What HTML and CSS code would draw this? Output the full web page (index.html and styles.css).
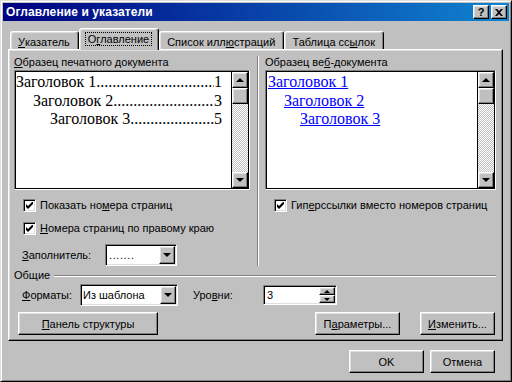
FILE: index.html
```html
<!DOCTYPE html>
<html lang="ru">
<head>
    <meta charset="UTF-8">
    <title>Оглавление и указатели</title>
    <link rel="stylesheet" href="styles.css">
</head>
<body>
<div class="window">
    <div class="titlebar">
        <span class="title">Оглавление и указатели</span>
        <div class="caption-buttons">
            <button class="caption-btn">?</button>
            <button class="caption-btn">
                <svg width="8" height="7" viewBox="0 0 8 7"><path d="M0 0H2L4 2L6 0H8L5 3.5L8 7H6L4 5L2 7H0L3 3.5Z" fill="#000"/></svg>
            </button>
        </div>
    </div>

    <div class="dialog">
        <div class="tabs">
            <div class="tab"><u>У</u>казатель</div>
            <div class="tab active"><span class="focus">О<u>г</u>лавление</span></div>
            <div class="tab">Список илл<u>ю</u>страций</div>
            <div class="tab">Таблица сс<u>ы</u>лок</div>
        </div>

        <div class="panel">
            <div class="samples">
                <div class="sample print">
                    <div class="sample-label"><u>О</u>бразец печатного документа</div>
                    <div class="preview">
                        <div class="preview-page">
                            <div class="toc-line"><span>Заголовок 1</span><span class="leader"></span><span>1</span></div>
                            <div class="toc-line lvl2"><span>Заголовок 2</span><span class="leader"></span><span>3</span></div>
                            <div class="toc-line lvl3"><span>Заголовок 3</span><span class="leader"></span><span>5</span></div>
                        </div>
                        <div class="scrollbar">
                            <div class="sb-btn"><i class="arrow-up"></i></div>
                            <div class="sb-thumb"></div>
                            <div class="sb-track"></div>
                            <div class="sb-btn"><i class="arrow-down"></i></div>
                        </div>
                    </div>

                    <label class="check">
                        <span class="checkbox"><svg width="7" height="7" viewBox="0 0 7 7"><path d="M0 2L2 4L7 -1V2L2 7L0 5Z" fill="#000"/></svg></span>
                        <span>Показать но<u>м</u>ера страниц</span>
                    </label>
                    <label class="check">
                        <span class="checkbox"><svg width="7" height="7" viewBox="0 0 7 7"><path d="M0 2L2 4L7 -1V2L2 7L0 5Z" fill="#000"/></svg></span>
                        <span><u>Н</u>омера страниц по правому краю</span>
                    </label>

                    <div class="field-row">
                        <span class="field-label filler-label"><u>З</u>аполнитель:</span>
                        <div class="combo filler">
                            <span class="combo-value dots">.......</span>
                            <span class="combo-btn"><i class="arrow-down"></i></span>
                        </div>
                    </div>
                </div>

                <div class="divider"></div>

                <div class="sample web">
                    <div class="sample-label">Образец ве<u>б</u>-документа</div>
                    <div class="preview">
                        <div class="preview-page web-page">
                            <a href="#">Заголовок 1</a>
                            <a href="#" class="lvl2">Заголовок 2</a>
                            <a href="#" class="lvl3">Заголовок 3</a>
                        </div>
                        <div class="scrollbar">
                            <div class="sb-btn"><i class="arrow-up"></i></div>
                            <div class="sb-thumb"></div>
                            <div class="sb-track"></div>
                            <div class="sb-btn"><i class="arrow-down"></i></div>
                        </div>
                    </div>

                    <label class="check">
                        <span class="checkbox"><svg width="7" height="7" viewBox="0 0 7 7"><path d="M0 2L2 4L7 -1V2L2 7L0 5Z" fill="#000"/></svg></span>
                        <span>Гип<u>е</u>рссылки вместо номеров страниц</span>
                    </label>
                </div>
            </div>

            <div class="group-title">Общие</div>

            <div class="formats-row">
                <span class="field-label formats-label"><u>Ф</u>орматы:</span>
                <div class="combo formats">
                    <span class="combo-value">Из шаблона</span>
                    <span class="combo-btn"><i class="arrow-down"></i></span>
                </div>
                <span class="field-label levels-label">Уро<u>в</u>ни:</span>
                <div class="spin">
                    <span class="spin-value">3</span>
                    <span class="spin-btns">
                        <span class="spin-btn"><i class="arrow-up small"></i></span>
                        <span class="spin-btn"><i class="arrow-down small"></i></span>
                    </span>
                </div>
            </div>

            <div class="actions-row">
                <button class="btn outline-btn"><u>П</u>анель структуры</button>
                <div class="actions-right">
                    <button class="btn params-btn">П<u>а</u>раметры...</button>
                    <button class="btn edit-btn"><u>И</u>зменить...</button>
                </div>
            </div>
        </div>

        <div class="dialog-buttons">
            <button class="btn ok-btn">OK</button>
            <button class="btn cancel-btn">Отмена</button>
        </div>
    </div>
</div>
</body>
</html>
```

FILE: styles.css
```css
* {
    margin: 0;
    padding: 0;
    box-sizing: border-box;
}

body {
    font-family: "Liberation Sans", Arial, sans-serif;
    font-size: 11px;
    color: #000;
    background: #c0c0c0;
}

button {
    font: inherit;
    color: inherit;
}

.window {
    width: 512px;
    height: 382px;
    padding: 2px;
    background: #c0c0c0;
    border: 1px solid;
    border-color: #dfdfdf #000 #000 #dfdfdf;
    box-shadow: inset 1px 1px #fff, inset -1px -1px #808080;
}

/* title bar */
.titlebar {
    height: 18px;
    display: flex;
    align-items: center;
    justify-content: space-between;
    padding: 0 2px 0 3px;
    background: linear-gradient(to right, #000080, #1084d0);
}

.title {
    color: #fff;
    font-size: 12px;
    font-weight: bold;
    letter-spacing: 0.1px;
}

.caption-buttons {
    display: flex;
    gap: 2px;
}

.caption-btn {
    width: 16px;
    height: 14px;
    display: flex;
    align-items: center;
    justify-content: center;
    font-weight: bold;
    line-height: 1;
    background: #c0c0c0;
    border: 1px solid;
    border-color: #fff #000 #000 #fff;
    box-shadow: inset -1px -1px #808080, inset 1px 1px #dfdfdf;
}

/* raised / sunken bits */
.btn,
.sb-btn,
.sb-thumb,
.combo-btn,
.spin-btn {
    background: #c0c0c0;
    border: 1px solid;
    border-color: #fff #000 #000 #fff;
    box-shadow: inset -1px -1px #808080, inset 1px 1px #dfdfdf;
    display: flex;
    align-items: center;
    justify-content: center;
}

.btn {
    height: 23px;
}

.combo,
.spin,
.checkbox {
    background: #fff;
    border: 1px solid;
    border-color: #808080 #fff #fff #808080;
    box-shadow: inset 1px 1px #000, inset -1px -1px #dfdfdf;
    padding: 1px;
}

.arrow-up,
.arrow-down {
    width: 0;
    height: 0;
    border-left: 4px solid transparent;
    border-right: 4px solid transparent;
}

.arrow-up {
    border-bottom: 4px solid #000;
}

.arrow-down {
    border-top: 4px solid #000;
}

.arrow-up.small {
    border-width: 0 3px 3px;
}

.arrow-down.small {
    border-width: 3px 3px 0;
}

/* dialog body */
.dialog {
    padding: 7px 6px 0 5px;
}

.tabs {
    display: flex;
    align-items: flex-end;
    padding-left: 2px;
}

.tab {
    height: 18px;
    display: flex;
    align-items: center;
    padding: 2px 8px 0 7px;
    border: 1px solid;
    border-bottom: none;
    border-color: #fff #000 transparent #fff;
    border-radius: 3px 3px 0 0;
    box-shadow: inset -1px 0 #808080, inset 1px 1px #dfdfdf;
}

.tab.active {
    height: 22px;
    margin-bottom: -1px;
    padding: 0 7px 1px 6px;
    position: relative;
    z-index: 1;
    background: #c0c0c0;
}

.focus {
    outline: 1px dotted #000;
    padding: 0 2px;
}

.panel {
    padding: 6px 6px 5px 5px;
    border: 1px solid;
    border-color: #fff #000 #000 #fff;
    box-shadow: inset -1px -1px #808080, inset 1px 1px #dfdfdf;
}

.samples {
    display: flex;
}

.sample {
    display: flex;
    flex-direction: column;
}

.sample.print {
    width: 236px;
}

.sample.web {
    flex: 1;
}

.divider {
    width: 2px;
    margin: 0 6px 0 7px;
    border-left: 1px solid #808080;
    border-right: 1px solid #fff;
}

.sample-label {
    height: 13px;
    line-height: 13px;
    margin-bottom: 1px;
}

.preview {
    height: 120px;
    display: flex;
    padding: 1px;
    background: #fff;
    border: 1px solid;
    border-color: #808080 #fff #fff #808080;
    box-shadow: inset 0 0 0 1px #000;
}

.preview-page {
    flex: 1;
    padding: 1px 9px 0 0;
    font-family: "Liberation Serif", "Times New Roman", serif;
    font-size: 16px;
    line-height: 18.5px;
    border-right: 1px solid #000;
    overflow: hidden;
}

.toc-line {
    display: flex;
    white-space: nowrap;
}

.toc-line.lvl2 {
    padding-left: 17px;
}

.toc-line.lvl3 {
    padding-left: 34px;
}

.leader {
    flex: 1;
    overflow: hidden;
}

.leader::before {
    content: "................................................................................";
}

.web-page {
    display: flex;
    flex-direction: column;
    align-items: flex-start;
    padding-left: 1px;
}

.web-page a {
    color: #0000ff;
    text-decoration: underline;
}

.web-page .lvl2 {
    margin-left: 16px;
}

.web-page .lvl3 {
    margin-left: 32px;
}

.scrollbar {
    width: 16px;
    display: flex;
    flex-direction: column;
    background: repeating-conic-gradient(#c0c0c0 0 25%, #fff 0 50%) 0 0 / 2px 2px;
}

.sb-btn,
.sb-thumb {
    height: 16px;
}

.sb-track {
    flex: 1;
}

/* checkboxes */
.check {
    display: flex;
    align-items: center;
    gap: 4px;
    height: 13px;
    line-height: 13px;
    margin: 9px 0 0 9px;
}

.check + .check {
    margin-top: 10px;
}

.checkbox {
    width: 13px;
    height: 13px;
    display: flex;
    align-items: center;
    justify-content: center;
}

/* fields */
.field-row,
.formats-row {
    display: flex;
    align-items: center;
    padding-left: 8px;
}

.field-row {
    margin-top: 9px;
}

.filler-label {
    width: 83px;
}

.combo {
    height: 22px;
    display: flex;
}

.combo.filler {
    width: 72px;
}

.combo.formats {
    width: 98px;
}

.combo-value {
    flex: 1;
    padding-left: 1px;
    line-height: 18px;
}

.combo-value.dots {
    padding-left: 2px;
    letter-spacing: 0.6px;
}

.combo-btn {
    width: 16px;
}

.group-title {
    display: flex;
    align-items: center;
    gap: 4px;
    margin-top: 3px;
    line-height: 13px;
}

.group-title::after {
    content: "";
    flex: 1;
    border-top: 1px solid #808080;
    border-bottom: 1px solid #fff;
}

.formats-row {
    margin-top: 2px;
    height: 22px;
}

.formats-label {
    width: 58px;
}

.levels-label {
    width: 70px;
    margin-left: 15px;
}

.spin {
    width: 74px;
    height: 20px;
    display: flex;
}

.spin-value {
    flex: 1;
    padding-left: 2px;
    line-height: 16px;
}

.spin-btns {
    width: 16px;
    display: flex;
    flex-direction: column;
}

.spin-btn {
    flex: 1;
}

/* buttons */
.actions-row {
    display: flex;
    margin-top: 6px;
    padding-right: 1px;
}

.outline-btn {
    width: 140px;
    margin-left: 4px;
}

.actions-right {
    display: flex;
    gap: 20px;
    margin-left: auto;
}

.params-btn {
    width: 85px;
}

.edit-btn {
    width: 75px;
}

.dialog-buttons {
    display: flex;
    justify-content: flex-end;
    gap: 6px;
    margin-top: 9px;
    padding-right: 8px;
}

.ok-btn {
    width: 75px;
}

.cancel-btn {
    width: 65px;
}
```
